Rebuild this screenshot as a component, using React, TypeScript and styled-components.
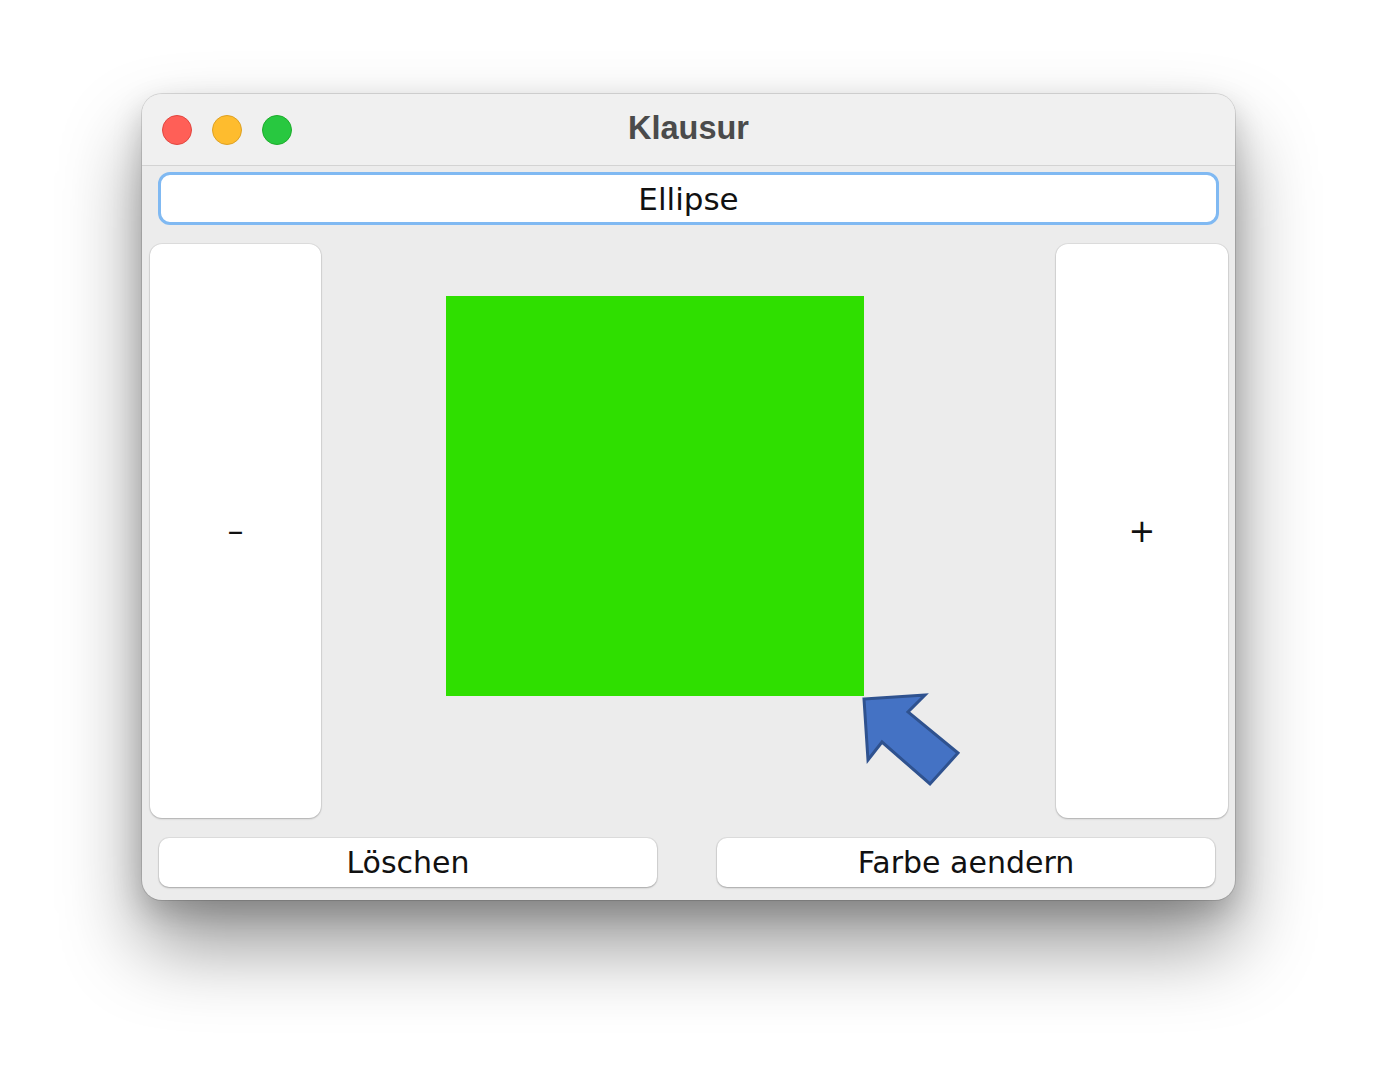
import React from "react";
import styled, { createGlobalStyle } from "styled-components";

const Global = createGlobalStyle`
  html, body { margin: 0; padding: 0; background: #ffffff; }
  body { font-family: "DejaVu Sans", "Liberation Sans", sans-serif; }
`;

const Page = styled.div`
  width: 1375px;
  height: 1090px;
  padding: 94px 0 0 142px;
  box-sizing: border-box;
`;

const Window = styled.div`
  width: 1093px;
  height: 806px;
  border-radius: 20px;
  background: #ececec;
  box-shadow: 0 0 0 1px rgba(0, 0, 0, 0.12), 0 45px 80px rgba(0, 0, 0, 0.42),
    0 12px 30px rgba(0, 0, 0, 0.18);
  overflow: hidden;
  display: flex;
  flex-direction: column;
`;

const TitleBar = styled.div`
  position: relative;
  height: 71px;
  flex: none;
  background: #f0f0f0;
  border-bottom: 1px solid #d3d3d3;
  display: flex;
  align-items: center;
  padding-left: 20px;
  gap: 20px;
`;

const Light = styled.span<{ $fill: string; $edge: string }>`
  width: 30px;
  height: 30px;
  border-radius: 50%;
  background: ${(p) => p.$fill};
  border: 1px solid ${(p) => p.$edge};
  box-sizing: border-box;
`;

const Title = styled.div`
  position: absolute;
  left: 0;
  right: 0;
  top: 0;
  bottom: 0;
  display: flex;
  align-items: center;
  justify-content: center;
  padding-bottom: 2px;
  font-family: "Liberation Sans", Arial, sans-serif;
  font-weight: 700;
  font-size: 32.5px;
  color: #4b4b4b;
  pointer-events: none;
`;

const Content = styled.div`
  flex: 1;
  display: flex;
  flex-direction: column;
  padding-top: 6px;
`;

const Field = styled.div`
  margin: 0 16px 0 16px;
  height: 53px;
  box-sizing: border-box;
  border: 3px solid #80b9f2;
  border-radius: 12px;
  background: #ffffff;
  display: flex;
  align-items: center;
  justify-content: center;
  font-size: 31px;
  color: #111;
`;

const Middle = styled.div`
  display: flex;
  margin: 19px 7px 0 8px;
  height: 574px;
`;

const SideButton = styled.div<{ $w: number }>`
  width: ${(p) => p.$w}px;
  flex: none;
  background: #ffffff;
  border-radius: 12px;
  box-shadow: 0 0 0 1px rgba(0, 0, 0, 0.06), 0 1px 2px rgba(0, 0, 0, 0.22);
  display: flex;
  align-items: center;
  justify-content: center;
  font-size: 32px;
  color: #111;
`;

const Canvas = styled.div`
  flex: 1;
  position: relative;
`;

const Drawing = styled.svg`
  position: absolute;
  left: 0;
  top: 0;
  width: 100%;
  height: 100%;
`;

const Bottom = styled.div`
  display: flex;
  gap: 60px;
  margin: 20px 20px 0 17px;
`;

const ActionButton = styled.div`
  flex: 1;
  height: 49px;
  background: #ffffff;
  border-radius: 10px;
  box-shadow: 0 0 0 1px rgba(0, 0, 0, 0.06), 0 1px 2px rgba(0, 0, 0, 0.25);
  display: flex;
  align-items: center;
  justify-content: center;
  font-size: 30px;
  color: #111;
`;

const ox = 321;
const oy = 244;
const arrow = [
  [864, 699],
  [925, 695],
  [908, 712],
  [958, 753],
  [930, 784],
  [882, 742],
  [868, 760],
]
  .map(([x, y]) => `${x - ox},${y - oy}`)
  .join(" ");

export default function App() {
  return (
    <>
      <Global />
      <Page>
        <Window>
          <TitleBar>
            <Light $fill="#ff5f57" $edge="#e2463f" />
            <Light $fill="#febc2e" $edge="#dea123" />
            <Light $fill="#28c840" $edge="#1dad2b" />
            <Title>Klausur</Title>
          </TitleBar>
          <Content>
            <Field>Ellipse</Field>
            <Middle>
              <SideButton $w={171}>–</SideButton>
              <Canvas>
                <Drawing viewBox="0 0 735 574">
                  <rect x={125} y={52} width={418} height={400} fill="#2fdf00" />
                  <polygon
                    points={arrow}
                    fill="#4472c4"
                    stroke="#2f528f"
                    strokeWidth={3}
                    strokeLinejoin="miter"
                  />
                </Drawing>
              </Canvas>
              <SideButton $w={172}>+</SideButton>
            </Middle>
            <Bottom>
              <ActionButton>Löschen</ActionButton>
              <ActionButton>Farbe aendern</ActionButton>
            </Bottom>
          </Content>
        </Window>
      </Page>
    </>
  );
}
